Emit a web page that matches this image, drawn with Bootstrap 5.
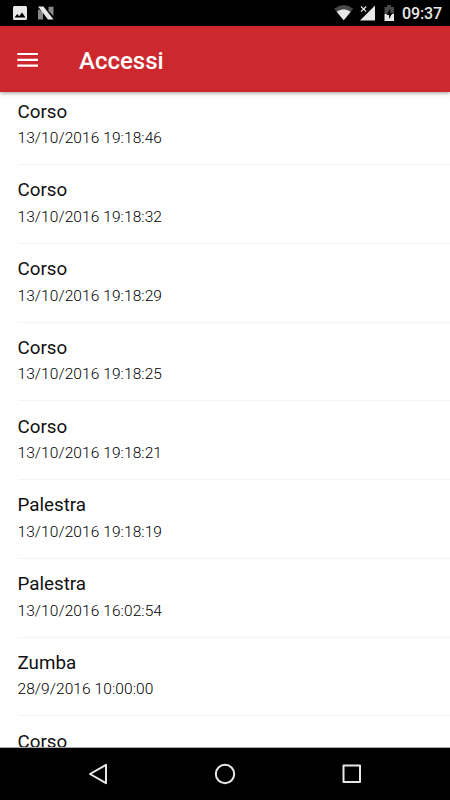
<!DOCTYPE html>
<html lang="it">
<head>
<meta charset="utf-8">
<meta name="viewport" content="width=device-width, initial-scale=1">
<title>Accessi</title>
<link href="https://cdn.jsdelivr.net/npm/bootstrap@5.3.0/dist/css/bootstrap.min.css" rel="stylesheet">
<style>
body { font-family: Roboto, sans-serif; background: #fff; color: #000; }
.status-bar { height: 26px; background: #000; padding: 0 9px 0 12px; }
.clock { font-size: 16px; line-height: 26px; color: #e8e8e8; font-weight: 500; margin-left: 4px; padding-top: 2px; width: 39px; white-space: nowrap; letter-spacing: -.1px; }
.app-bar { height: 66px; background: #cd282d; padding: 0 17px; box-shadow: 0 1px 4px rgba(0,0,0,.4); z-index: 1; }
.app-title { font-size: 24px; line-height: 28px; font-weight: 500; color: #fff; margin: 3px 0 0 40px; }
.access-list { border-radius: 0; min-height: 0; }
.access-item { flex: 0 0 78.75px; margin-left: 17.5px; padding: 13.25px 0 0; border: 0; border-bottom: 1px solid #f3f3f3; background: transparent; }
.access-item:first-child { flex-basis: 73px; padding-top: 7.75px; }
.access-name { font-size: 18.8px; line-height: 24px; color: #111; }
.access-time { font-size: 15.5px; line-height: 20px; font-weight: 300; color: #000; margin-top: 4.5px; letter-spacing: .08px; }
.nav-keys { height: 53px; background: #000; border-top: 1px solid #aaa; padding: 0 87px; }
</style>
</head>
<body>
<div class="d-flex flex-column vh-100 overflow-hidden">
  <div class="status-bar d-flex align-items-center flex-shrink-0">
    <svg width="16" height="16" viewBox="0 0 16 16"><path fill="#e8e8e8" fill-rule="evenodd" d="M2.500 1h11Q15 1 15 2.500v11Q15 15 13.500 15h-11Q1 15 1 13.500v-11Q1 1 2.500 1ZM2.500 12.500h11L10 7.500 7.200 11.200 5.300 9Z"/></svg>
    <svg class="ms-2 me-auto" width="20" height="16" viewBox="0 0 20 16"><path fill="#888" d="M2 4v10.500h5V7ZM12.500 1.800h5V11l-5-5Z"/><path fill="#e8e8e8" d="M2 1.500h5.500l10 13H12Z"/></svg>
    <svg width="20" height="16" viewBox="0 0 20 16"><path fill="#484848" d="M.2 3.700Q10-3.500 19.200 3.700L9.700 15.200Z"/><path fill="#e8e8e8" d="M2.700 6.800Q9.700 1.500 16.700 6.800L9.700 15.200Z"/></svg>
    <svg class="ms-1" width="18" height="16" viewBox="0 0 18 16"><path fill="#e8e8e8" d="M17 .5v15H2Z"/><path fill="#000" d="M0 0h9v7H0Z"/><path stroke="#e8e8e8" stroke-width="1.200" d="m3 1.500 5.200 5.200m0-5.200L3 6.700"/></svg>
    <svg class="ms-2" width="14" height="18" viewBox="0 0 14 18"><path fill="#484848" d="M.5 3h2.500V1h4v2H10v7H.5Z"/><path fill="#e8e8e8" d="M.5 10H10v7H.5Z"/><path fill="#000" d="M6.300 4.800 2.500 11H5v4L8.500 9H6.300Z"/></svg>
    <span class="clock">09:37</span>
  </div>
  <header class="app-bar d-flex align-items-center flex-shrink-0 position-relative">
    <svg width="22" height="18" viewBox="0 0 22 18"><path stroke="#fff" stroke-width="2.200" d="M.3 4h20.700M.3 9.900h20.700M.3 15.700h20.700"/></svg>
    <h1 class="app-title">Accessi</h1>
  </header>
  <main class="list-group access-list flex-grow-1 overflow-hidden">
    <div class="list-group-item access-item"><div class="access-name">Corso</div><div class="access-time">13/10/2016 19:18:46</div></div>
    <div class="list-group-item access-item"><div class="access-name">Corso</div><div class="access-time">13/10/2016 19:18:32</div></div>
    <div class="list-group-item access-item"><div class="access-name">Corso</div><div class="access-time">13/10/2016 19:18:29</div></div>
    <div class="list-group-item access-item"><div class="access-name">Corso</div><div class="access-time">13/10/2016 19:18:25</div></div>
    <div class="list-group-item access-item"><div class="access-name">Corso</div><div class="access-time">13/10/2016 19:18:21</div></div>
    <div class="list-group-item access-item"><div class="access-name">Palestra</div><div class="access-time">13/10/2016 19:18:19</div></div>
    <div class="list-group-item access-item"><div class="access-name">Palestra</div><div class="access-time">13/10/2016 16:02:54</div></div>
    <div class="list-group-item access-item"><div class="access-name">Zumba</div><div class="access-time">28/9/2016 10:00:00</div></div>
    <div class="list-group-item access-item"><div class="access-name">Corso</div></div>
  </main>
  <nav class="nav-keys d-flex align-items-center justify-content-between flex-shrink-0">
    <svg width="22" height="22" viewBox="0 0 22 22" fill="none" stroke="#e8e8e8" stroke-width="2" stroke-linejoin="round"><path d="M19 1.800v18.400L3 11Z"/></svg>
    <svg width="22" height="22" viewBox="0 0 22 22" fill="none" stroke="#e8e8e8" stroke-width="2"><circle cx="11" cy="11" r="9.200"/></svg>
    <svg width="22" height="22" viewBox="0 0 22 22" fill="none" stroke="#e8e8e8" stroke-width="2" stroke-linejoin="round"><path d="M2.500 2.500h16.500v16.500H2.500Z"/></svg>
  </nav>
</div>
<script src="https://cdn.jsdelivr.net/npm/bootstrap@5.3.0/dist/js/bootstrap.bundle.min.js"></script>
</body>
</html>
